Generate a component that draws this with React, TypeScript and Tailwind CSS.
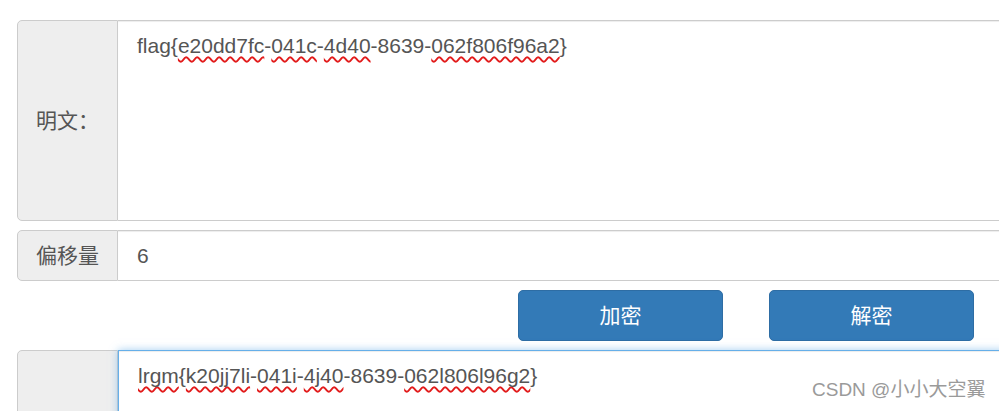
const font = "font-['Liberation_Sans','Noto_Sans_CJK_SC',sans-serif]";

function Wavy({ children }: { children: React.ReactNode }) {
  return (
    <span className="underline decoration-wavy decoration-[#e21b1b] decoration-[1.5px] underline-offset-[3px] [text-decoration-skip-ink:none]">
      {children}
    </span>
  );
}

function Label({ text }: { text: string }) {
  return (
    <div className="flex w-[101px] shrink-0 items-center justify-center rounded-l-[5px] border border-[#ccc] bg-[#eee] text-[21px] text-[#555]">
      {text}
    </div>
  );
}

export default function App() {
  return (
    <div className={`relative h-[411px] w-[999px] overflow-hidden bg-white ${font}`}>
      <div className="ml-[17px] mt-[20px] flex w-[1100px] flex-col">
        {/* plain text */}
        <div className="flex h-[201px]">
          <Label text="明文：" />
          <div className="flex-1 border border-l-0 border-[#ccc] bg-white pl-[19px] pt-[10px] text-[21px] leading-[30px] text-[#555] shadow-[inset_0_1px_1px_rgba(0,0,0,0.075)]">
            flag{"{"}<Wavy>e20dd7fc</Wavy>-<Wavy>041c</Wavy>-<Wavy>4d40</Wavy>-8639-<Wavy>062f806f96a2</Wavy>{"}"}
          </div>
        </div>

        {/* offset */}
        <div className="mt-[9px] flex h-[51px]">
          <Label text="偏移量" />
          <div className="flex flex-1 items-center border border-l-0 border-[#ccc] bg-white pl-[19px] text-[21px] leading-[30px] text-[#555] shadow-[inset_0_1px_1px_rgba(0,0,0,0.075)]">
            6
          </div>
        </div>

        {/* actions */}
        <div className="ml-[501px] mt-[9px] flex gap-[46px]">
          <button className="flex h-[51px] w-[205px] items-center justify-center rounded-[5px] border border-[#2e6da4] bg-[#337ab7] text-[21px] text-white">
            加密
          </button>
          <button className="flex h-[51px] w-[205px] items-center justify-center rounded-[5px] border border-[#2e6da4] bg-[#337ab7] text-[21px] text-white">
            解密
          </button>
        </div>

        {/* cipher text — label sits below the visible area */}
        <div className="mt-[9px] flex h-[201px]">
          <Label text="" />
          <div className="flex-1 border border-[#66afe9] bg-white pl-[19px] pt-[10px] text-[21px] leading-[30px] text-[#555] shadow-[inset_0_1px_1px_rgba(0,0,0,0.075),0_0_8px_rgba(102,175,233,0.6)]">
            <Wavy>lrgm</Wavy>{"{"}<Wavy>k20jj7li</Wavy>-<Wavy>041i</Wavy>-<Wavy>4j40</Wavy>-8639-<Wavy>062l806l96g2</Wavy>{"}"}
          </div>
        </div>
      </div>

      <div className="absolute left-[812px] top-[377px] text-[19px] leading-[26px] text-[#9a9a9a] [text-shadow:0_0_2px_#fff]">
        CSDN @小小大空翼
      </div>
    </div>
  );
}
